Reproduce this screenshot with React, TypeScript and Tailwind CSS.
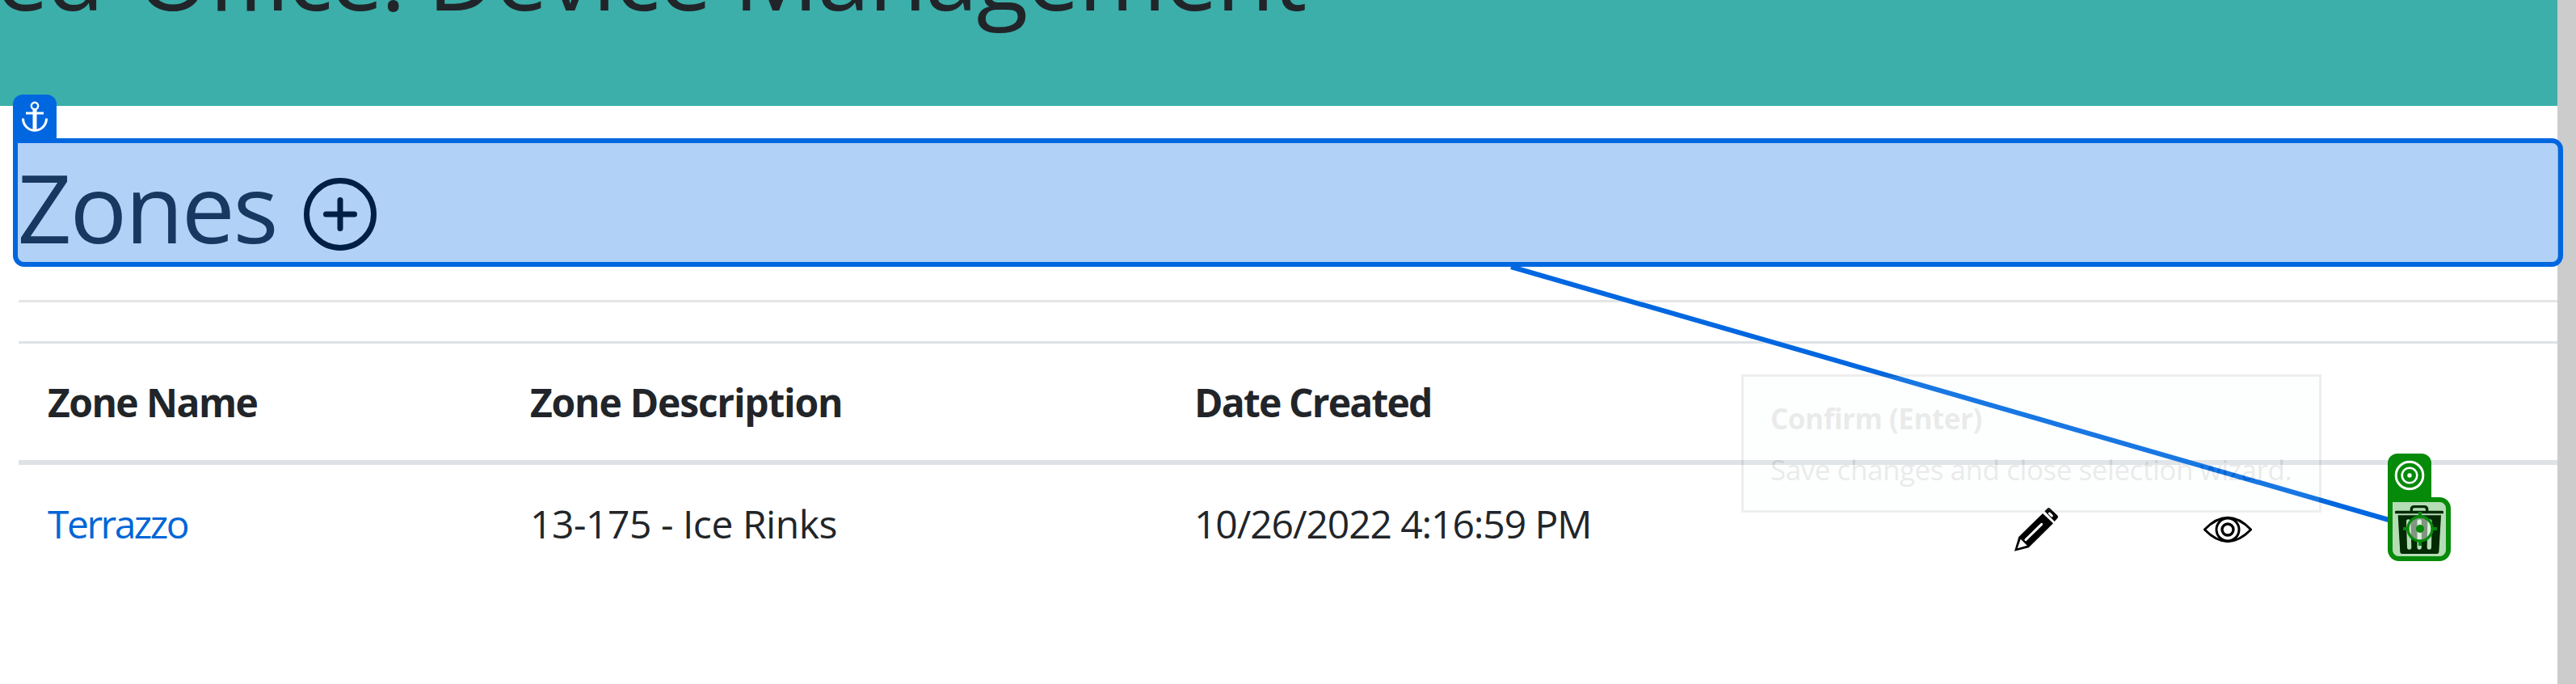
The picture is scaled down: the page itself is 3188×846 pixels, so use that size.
function PlusCircle() {
  return (
    <svg viewBox="0 0 90 90" className="h-[90px] w-[90px]" fill="none" stroke="#000" strokeWidth="7">
      <circle cx="45" cy="45" r="41.5" />
      <path d="M45 27.5V62.5M27.5 45H62.5" strokeLinecap="round" />
    </svg>
  );
}

function Pencil() {
  return (
    <svg viewBox="30 45 180 180" className="h-[60px] w-[60px]">
      <path d="M39 215L55 162L144 75L183 112L92 202Z" fill="#000" />
      <path d="M151 67L161 57Q166 51 172 57L198 82Q204 88 198 94L188 105Z" fill="#000" />
      <path d="M62 170L86 194L50 205Z" fill="#fff" />
      <path d="M81 173L140 115M169 75L178 84" stroke="#fff" strokeWidth="9" strokeLinecap="round" fill="none" />
    </svg>
  );
}

function Eye() {
  return (
    <svg viewBox="861 105 180 180" className="h-[60px] w-[60px]" fill="none" stroke="#000" strokeWidth="9">
      <path d="M865 195Q908 151 951 151T1037 195Q994 239 951 239T865 195Z" strokeLinejoin="round" />
      <circle cx="951" cy="195" r="42" />
      <circle cx="951" cy="195" r="21" strokeWidth="10" />
    </svg>
  );
}

function Trash() {
  return (
    <svg viewBox="192 255 180 180" className="h-[60px] w-[60px]" fill="none" stroke="#000">
      <path d="M197 280.500H367" strokeWidth="11" strokeLinecap="round" />
      <path d="M253 277V270Q253 260 264 260H300Q311 260 311 270V277" strokeWidth="10" />
      <path d="M203 292H363L355 429Q354 435 348 435H218Q212 435 211 429Z" fill="#000" stroke="none" />
      <path d="M242 315L245 411M282.500 315V411M321 315L319 411" stroke="#fff" strokeWidth="16" strokeLinecap="round" />
    </svg>
  );
}

function Anchor() {
  return (
    <svg viewBox="0 0 54 54" className="h-[54px] w-[54px]" fill="none" stroke="#fff">
      <circle cx="27" cy="14" r="4.200" strokeWidth="2.400" />
      <path d="M27 18V44" strokeWidth="5" />
      <path d="M16 23H38" strokeWidth="3" />
      <path d="M12.500 29.500A14.500 14.800 0 0 0 41.500 29.500" strokeWidth="3" />
    </svg>
  );
}

function Bullseye() {
  return (
    <svg viewBox="0 0 54 54" className="h-[54px] w-[54px]" fill="none" stroke="#fff">
      <circle cx="27" cy="27" r="16.800" strokeWidth="3" />
      <circle cx="27" cy="27" r="9.300" strokeWidth="2.600" />
      <circle cx="27" cy="27" r="2.700" fill="#fff" stroke="none" />
    </svg>
  );
}

function Crosshair() {
  return (
    <svg viewBox="222 276 126 126" className="h-[42px] w-[42px]" fill="none" stroke="#068a0a">
      <circle cx="285" cy="339" r="45" strokeWidth="10" fill="#fff" fillOpacity="0.5" />
      <circle cx="285" cy="339" r="15" fill="#068a0a" stroke="none" />
      <path d="M285 276V294M285 384V402M222 339H240M330 339H348" strokeWidth="12" />
    </svg>
  );
}

const grid = "grid grid-cols-[597px_822px_1012px_237px_237px_237px]";

export default function App() {
  return (
    <div className="relative flex h-[846px] w-[3188px] overflow-hidden bg-white font-['Open_Sans','Noto_Sans',sans-serif] text-[#212529]">
      <main className="flex w-[3165px] flex-col">
        <header className="h-[131px] overflow-hidden bg-[#3cafaa]">
          <h1 className="-mt-[105px] flex text-[117.6px] leading-[144px] whitespace-nowrap">
            <span className="flex w-[529px] shrink-0 justify-end pr-[30px] tracking-[-3.26px] [word-spacing:15px]">ed Office:</span>
            <span className="tracking-[-1.98px]">Device Management</span>
          </h1>
        </header>
        <div className="ml-[23px] flex flex-col">
          <h2 className="mt-[52px] flex h-[144px] items-start text-[117.6px] leading-[144px]">
            <span className="-ml-[1.5px] w-[354.5px] tracking-[-2.3px]">Zones</span>
            <span className="mt-[37px]">
              <PlusCircle />
            </span>
          </h2>
          <hr className="mt-11 h-[3px] border-0 bg-[#e5e5e5]" />
          <section className="mt-12 text-[48px] leading-[72px]">
            <div className={`${grid} h-[153px] border-t-[3px] border-b-[6px] border-[#dee2e6] pt-[37px] font-bold`}>
              <div className="pl-9 tracking-[-1.57px]">Zone Name</div>
              <div className="pl-9 tracking-[-1.22px]">Zone Description</div>
              <div className="pl-9 tracking-[-1.82px]">Date Created</div>
            </div>
            <div className={`${grid} pt-[37px]`}>
              <a className="pl-9 tracking-[-2.5px] text-[#0366d6]">Terrazzo</a>
              <div className="pl-9 tracking-[-0.46px]">13-175 - Ice Rinks</div>
              <div className="pl-9 tracking-[-1.09px]">10/26/2022 4:16:59 PM</div>
              <div className="pt-[13px] pl-9">
                <Pencil />
              </div>
              <div className="pt-[13px] pl-9">
                <Eye />
              </div>
              <div className="pt-[13px] pl-9">
                <Trash />
              </div>
            </div>
          </section>
        </div>
      </main>
      <aside className="w-[23px] bg-[#cccccc]" />

      <svg className="pointer-events-none absolute inset-0" width="3188" height="846">
        <path d="M1870 330L2958 643.500" stroke="#0067e0" strokeWidth="6" />
      </svg>

      <div className="absolute top-[117px] left-4 rounded-t-xl bg-[#0067e0]">
        <Anchor />
      </div>
      <div className="absolute top-[171px] left-4 h-[159px] w-[3156px] rounded-[14px] rounded-tl-none border-[6px] border-[#0067e0] bg-[#0067e0]/30 bg-clip-padding" />

      <div className="absolute top-[561px] left-[2955px] rounded-t-xl bg-[#068a0a]">
        <Bullseye />
      </div>
      <div className="absolute top-[615px] left-[2955px] flex h-[79px] w-[78px] items-center justify-center rounded-[14px] rounded-tl-none border-[6px] border-[#068a0a] bg-[#068a0a]/30 bg-clip-padding pt-px pl-px">
        <div className="-mt-[3px] ml-px">
          <Crosshair />
        </div>
      </div>

      <div className="absolute top-[463px] left-[2155px] h-[171px] w-[718px] border-[3px] border-[#606060] bg-[#ebfffa] px-[33px] pt-[25px] text-[35px] leading-[54px] whitespace-nowrap text-[#404040] opacity-10">
        <div className="font-bold tracking-[-0.45px]">Confirm (Enter)</div>
        <div className="mt-[9px] tracking-[-0.45px]">Save changes and close selection wizard.</div>
      </div>
    </div>
  );
}
